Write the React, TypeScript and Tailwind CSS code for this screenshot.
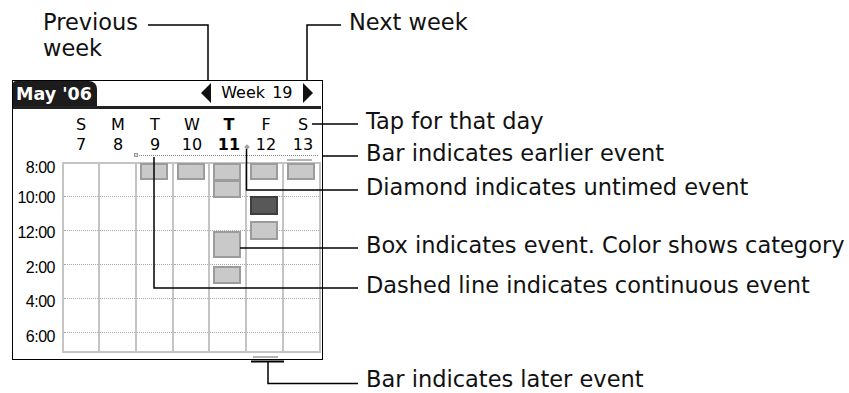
const DAYS = ['S', 'M', 'T', 'W', 'T', 'F', 'S'];
const DATES = [7, 8, 9, 10, 11, 12, 13];
const TODAY = 4;

// y / h in page pixels, column inner top sits at y=164
const EVENTS: { col: number; y: number; h: number; dark?: boolean }[] = [
  { col: 2, y: 163, h: 17 },
  { col: 3, y: 163, h: 17 },
  { col: 4, y: 163, h: 18 },
  { col: 4, y: 180, h: 18 },
  { col: 4, y: 231, h: 27 },
  { col: 4, y: 266, h: 18 },
  { col: 5, y: 163, h: 17 },
  { col: 5, y: 196, h: 19, dark: true },
  { col: 5, y: 221, h: 19 },
  { col: 6, y: 163, h: 17 },
];

const TIMES = [
  { label: '8:00', mt: 'mt-[-3px]' },
  { label: '10:00', mt: 'mt-[12px]' },
  { label: '12:00', mt: 'mt-[17px]' },
  { label: '2:00', mt: 'mt-[17px]' },
  { label: '4:00', mt: 'mt-[16px]' },
  { label: '6:00', mt: 'mt-[17px]' },
];

function Arrow({ dir }: { dir: 'left' | 'right' }) {
  return (
    <svg width="10" height="20" viewBox="0 0 10 20">
      <polygon points={dir === 'left' ? '10,0 10,20 0,10' : '0,0 0,20 10,10'} fill="#111" />
    </svg>
  );
}

function DayColumn({ col }: { col: number }) {
  return (
    <div className="relative flex flex-col border-r-2 border-[#c4c4c4]">
      <div className="h-[33px] border-b border-dotted border-[#a8a8a8]" />
      <div className="h-[34px] border-b border-dotted border-[#a8a8a8]" />
      <div className="h-[34px] border-b border-dotted border-[#a8a8a8]" />
      <div className="h-[34px] border-b border-dotted border-[#a8a8a8]" />
      <div className="h-[34px] border-b border-dotted border-[#a8a8a8]" />
      {EVENTS.filter((e) => e.col === col).map((e, i) => (
        <div
          key={i}
          className={
            e.dark
              ? 'absolute left-[3px] w-[28px] border-2 border-[#3e3e3e] bg-[#585858]'
              : 'absolute left-[3px] w-[28px] border-2 border-[#9c9c9c] bg-[#c9c9c9]'
          }
          style={{ top: e.y - 164, height: e.h }}
        />
      ))}
    </div>
  );
}

function Screen() {
  return (
    <div className="flex h-[280px] w-[310.5px] flex-col border-[1.5px] border-black font-['DejaVu_Sans',sans-serif] text-black">
      {/* header */}
      <div className="flex h-[24.5px] items-stretch">
        <div className="flex w-[84px] items-end rounded-tl-[3px] rounded-tr-[8px] bg-[#1c1c1c] pb-[2px] pl-[3px] text-[17.5px] font-bold leading-[20px] text-white">
          May '06
        </div>
        <div className="ml-auto flex items-center gap-[10px] pr-[9px]">
          <Arrow dir="left" />
          <span className="text-[16px] leading-[20px] [word-spacing:2px]">Week 19</span>
          <Arrow dir="right" />
        </div>
      </div>
      <div className="mr-[1px] h-[3px] bg-[#222]" />

      {/* day letters / dates */}
      <div className="ml-[48.5px] mt-[7px] grid h-[18px] w-[259px] grid-cols-7 text-center text-[16px] leading-[18px]">
        {DAYS.map((d, i) => (
          <span key={i} className={i === TODAY ? 'pl-[2px] font-bold' : 'pl-[2px]'}>
            {d}
          </span>
        ))}
      </div>
      <div className="relative ml-[48.5px] mt-[2px] grid h-[18px] w-[259px] grid-cols-7 text-center text-[16px] leading-[18px]">
        {DATES.map((d, i) => (
          <span key={i} className={i === TODAY ? 'pl-[2px] font-bold' : 'pl-[2px]'}>
            {d}
          </span>
        ))}
        <div className="absolute left-[183px] top-[9px] h-[4px] w-[4px] rotate-45 bg-[#a0a0a0]" />
      </div>

      {/* continuous-event line + earlier bar */}
      <div className="ml-[48.5px] grid h-[8px] w-[259px] grid-cols-7">
        <div className="relative col-span-5 col-start-3 mr-[3px] mt-[1px] border-t border-dotted border-[#8a8a8a]">
          <div className="absolute left-[-2px] top-[-3px] h-[4px] w-[4px] border border-[#9a9a9a] bg-[#dcdcdc]" />
          <div className="absolute right-[6px] top-[3px] h-[2px] w-[25px] bg-[#b4b4b4]" />
        </div>
      </div>

      {/* time grid */}
      <div className="flex">
        <div className="flex w-[48.5px] flex-col items-end pr-[6.5px] font-['Liberation_Sans',sans-serif] text-[16px] leading-[18px] tracking-[-0.5px]">
          {TIMES.map((t) => (
            <span key={t.label} className={`h-[18px] ${t.mt}`}>
              {t.label}
            </span>
          ))}
        </div>
        <div className="grid h-[191px] w-[259px] grid-cols-7 border-2 border-r-0 border-[#c4c4c4]">
          {DAYS.map((_, i) => (
            <DayColumn key={i} col={i} />
          ))}
        </div>
      </div>

      {/* later bar */}
      <div className="ml-[48.5px] grid w-[259px] grid-cols-7">
        <div className="col-start-6 mx-[6px] mt-[3px] h-[2px] bg-[#b4b4b4]" />
      </div>
    </div>
  );
}

const LABEL = "absolute whitespace-nowrap text-[22.5px] leading-[26px] text-[#111]";

export default function App() {
  return (
    <div className="relative h-[393px] w-[849px] overflow-hidden bg-white pl-[12px] pt-[80px] font-['DejaVu_Sans',sans-serif]">
      <Screen />

      {/* callout leader lines */}
      <svg className="pointer-events-none absolute inset-0" width="849" height="393">
        <g fill="none" stroke="#000" strokeWidth="1.5">
          <polyline points="148,25 208,25 208,81" />
          <polyline points="307,81 307,25 341,25" />
          <line x1="312" y1="124" x2="358" y2="124" />
          <line x1="322" y1="156" x2="358" y2="156" />
          <polyline points="246.5,149 246.5,190 358,190" />
          <line x1="240" y1="248" x2="358" y2="248" />
          <polyline points="154,157 154,288 358,288" />
          <polyline points="268,361 268,383.5 358,383.5" />
        </g>
        <line x1="251" y1="361.5" x2="284" y2="361.5" stroke="#000" strokeWidth="2" />
      </svg>

      {/* callout labels */}
      <div className={`${LABEL} left-[43px] top-[9px]`}>
        Previous
        <br />
        week
      </div>
      <div className={`${LABEL} left-[349px] top-[9px]`}>Next week</div>
      <div className={`${LABEL} left-[366px] top-[108px]`}>Tap for that day</div>
      <div className={`${LABEL} left-[366px] top-[140px]`}>Bar indicates earlier event</div>
      <div className={`${LABEL} left-[366px] top-[174px]`}>Diamond indicates untimed event</div>
      <div className={`${LABEL} left-[366px] top-[232px]`}>Box indicates event. Color shows category</div>
      <div className={`${LABEL} left-[366px] top-[272px]`}>Dashed line indicates continuous event</div>
      <div className="absolute left-[366px] top-[368px] whitespace-nowrap text-[22.5px] leading-[22px] text-[#111]">
        Bar indicates later event
      </div>
    </div>
  );
}
